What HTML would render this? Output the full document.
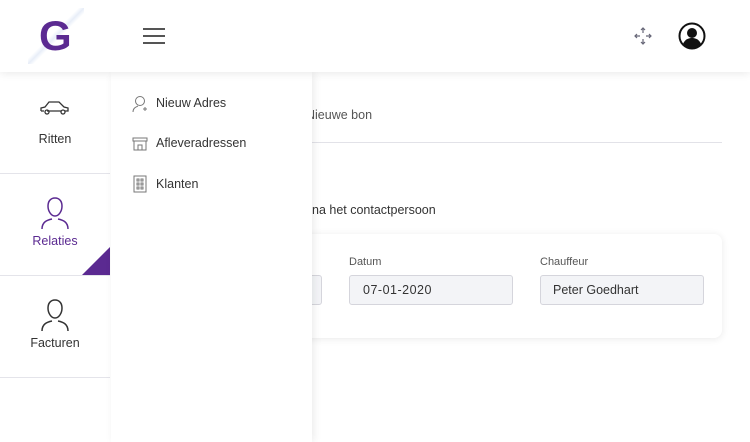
<!DOCTYPE html>
<html><head><style>
body{margin:0;width:750px;height:442px;overflow:hidden;background:#fff;font-family:"Liberation Sans",sans-serif;position:relative}
.hdr{position:absolute;left:0;top:0;width:750px;height:72px;background:#fff;box-shadow:0 2px 8px rgba(0,0,0,.08);z-index:3}
.side{position:absolute;left:0;top:72px;width:110px;height:370px;background:#fff;z-index:2}
.it{position:absolute;left:0;width:110px;height:101px;border-bottom:1px solid #e4e4ea;text-align:center;font-size:12.5px;color:#333}
.menu{position:absolute;left:111px;top:72px;width:201px;height:370px;background:#fff;box-shadow:2px 0 8px rgba(0,0,0,.08);z-index:2}
.mi{position:absolute;left:45px;font-size:12.5px;color:#333}
.lbl{position:absolute;font-size:11px;color:#555}
.inp{position:absolute;top:275px;height:30px;border:1px solid #d5d5dc;border-radius:3px;background:#f3f4f7;font-size:12.5px;color:#333;line-height:29px;box-sizing:border-box}
</style></head><body>
<div class="hdr">
<div style="position:absolute;left:28px;top:8px;width:56px;height:56px;background:linear-gradient(135deg,transparent 45%,#e8eef8 50%,transparent 55%)"></div>
<div style="position:absolute;left:39px;top:14px;font-size:42px;line-height:44px;font-weight:bold;color:#5b2a91">G</div>
<div style="position:absolute;left:143px;top:28px;width:22px;height:2px;background:#555;box-shadow:0 7px 0 #555,0 14px 0 #555"></div>
<svg style="position:absolute;left:633px;top:26px" width="20" height="20" viewBox="0 0 20 20" fill="none" stroke="#667" stroke-width="1.2"><path d="M10 2v5M8 4l2-2 2 2M10 18v-5M8 16l2 2 2-2M2 10h5M4 8l-2 2 2 2M18 10h-5M16 8l2 2-2 2"/></svg>
<svg style="position:absolute;left:678px;top:22px" width="28" height="28" viewBox="0 0 28 28"><circle cx="14" cy="14" r="12.5" fill="#fff" stroke="#111" stroke-width="2"/><circle cx="14" cy="11" r="5" fill="#111"/><path d="M5 22c2-5 6-6 9-6s7 1 9 6a12 12 0 0 1-18 0z" fill="#111"/></svg>
</div>
<div class="side">
<div class="it" style="top:0"><svg style="position:absolute;left:39px;top:28px" width="32" height="16" viewBox="0 0 32 16" fill="none" stroke="#333" stroke-width="1.3"><path d="M2 11V8l4-1 4-5h10l5 5 4 1v3h-3M8 11h14M5 11H2"/><circle cx="8" cy="12" r="2"/><circle cx="24" cy="12" r="2"/></svg><div style="position:absolute;top:60px;width:110px">Ritten</div></div>
<div class="it" style="top:102px"><svg style="position:absolute;left:40px;top:22px" width="30" height="34" viewBox="0 0 30 34" fill="none" stroke="#5b2a91" stroke-width="1.5"><path d="M15 2c-5 0-7 4-7 8 0 5 3 10 7 10s7-5 7-10c0-4-2-8-7-8zM2 33c0-7 5-9 10-10M28 33c0-7-5-9-10-10"/></svg><div style="position:absolute;top:60px;width:110px;color:#5b2a91">Relaties</div>
<div style="position:absolute;right:0;bottom:0;width:0;height:0;border-left:28px solid transparent;border-bottom:28px solid #5b2a91"></div></div>
<div class="it" style="top:204px"><svg style="position:absolute;left:40px;top:22px" width="30" height="34" viewBox="0 0 30 34" fill="none" stroke="#333" stroke-width="1.5"><path d="M15 2c-5 0-7 4-7 8 0 5 3 10 7 10s7-5 7-10c0-4-2-8-7-8zM2 33c0-7 5-9 10-10M28 33c0-7-5-9-10-10"/></svg><div style="position:absolute;top:60px;width:110px">Facturen</div></div>
</div>
<div class="menu">
<svg style="position:absolute;left:21px;top:23px" width="16" height="18" viewBox="0 0 16 18" fill="none" stroke="#777" stroke-width="1"><circle cx="8" cy="6" r="4.5"/><path d="M1 17c0-4 3-5 5-6M11 14h4M13 12v4"/></svg>
<div class="mi" style="top:24px">Nieuw Adres</div>
<svg style="position:absolute;left:21px;top:65px" width="16" height="14" viewBox="0 0 16 14" fill="none" stroke="#777" stroke-width="1"><path d="M1 1h14v3H1zM2 4v9h12V4M6 13V8h4v5"/></svg>
<div class="mi" style="top:64px">Afleveradressen</div>
<svg style="position:absolute;left:22px;top:103px" width="14" height="18" viewBox="0 0 14 18" fill="none" stroke="#777" stroke-width="1"><rect x="1" y="1" width="12" height="16"/><path d="M4 4h2v2H4zM8 4h2v2H8zM4 8h2v2H4zM8 8h2v2H8zM4 12h2v2H4zM8 12h2v2H8z"/></svg>
<div class="mi" style="top:105px">Klanten</div>
</div>
<div style="position:absolute;left:306px;top:108px;font-size:12.5px;color:#555">Nieuwe bon</div>
<div style="position:absolute;left:312px;top:142px;width:410px;height:1px;background:#e2e2e8"></div>
<div style="position:absolute;left:312px;top:203px;font-size:12.5px;color:#333">na het contactpersoon</div>
<div style="position:absolute;left:280px;top:234px;width:442px;height:104px;background:#fff;border-radius:8px;box-shadow:0 1px 8px rgba(0,0,0,.09)"></div>
<div class="lbl" style="left:349px;top:256px">Datum</div>
<div class="lbl" style="left:540px;top:256px">Chauffeur</div>
<div class="inp" style="left:290px;width:32px"></div>
<div class="inp" style="left:349px;width:164px;padding-left:13px;letter-spacing:.5px">07-01-2020</div>
<div class="inp" style="left:540px;width:164px;padding-left:12px">Peter Goedhart</div>
</body></html>
